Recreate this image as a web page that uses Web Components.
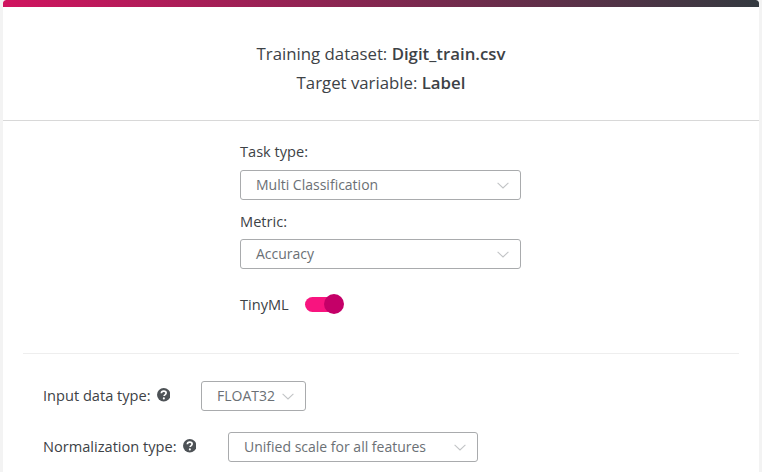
<!DOCTYPE html>
<html><head><meta charset="utf-8"><style>
html,body{margin:0;padding:0;background:#f3f3f3;height:472px;overflow:hidden}
body{font-family:"Open Sans",sans-serif;color:#3d4246}
b{font-weight:600}
</style></head><body>
<app-card>
  <div slot="summary">Training dataset: <b>Digit_train.csv</b></div>
  <div slot="summary">Target variable: <b>Label</b></div>
  <field-block label="Task type:" value="Multi Classification"></field-block>
  <field-block label="Metric:" value="Accuracy"></field-block>
  <toggle-row label="TinyML"></toggle-row>
  <inline-row slot="advanced" label="Input data type:" value="FLOAT32" width="105" gap="31"></inline-row>
  <inline-row slot="advanced" label="Normalization type:" value="Unified scale for all features" width="250" gap="32"></inline-row>
</app-card>
<script>
class AppCard extends HTMLElement{constructor(){super();this.attachShadow({mode:'open'}).innerHTML=`<style>
:host{display:block;margin:0 3px;background:#fff;border-radius:3px 3px 0 0;height:472px;overflow:hidden}
.bar{height:7px;background:linear-gradient(90deg,#d0145f,#343a40);border-radius:3px 3px 0 0}
.summary{height:114px;box-sizing:border-box;padding-top:32px;border-bottom:1px solid #d8d8d8;text-align:center;font-size:16.8px;line-height:29px;color:#3d4246}
.main{width:281px;margin-left:237px;padding-top:20px;height:232px;box-sizing:border-box}
.rule{height:1px;background:#eeeeee;margin:0 20px}
.adv{padding:27px 0 0 40px}
</style><div class="bar"></div><div class="summary"><slot name="summary"></slot></div>
<div class="main"><slot></slot></div><div class="rule"></div><div class="adv"><slot name="advanced"></slot></div>`}}
const chev=`<svg width="12" height="7" viewBox="0 0 12 7" fill="none" stroke="#c2c4c6" stroke-width="1.1"><path d="M.6.8 6 6 11.4.8"/></svg>`;
class SelectBox extends HTMLElement{constructor(){super();this.attachShadow({mode:'open'}).innerHTML=`<style>
:host{display:flex;align-items:center;box-sizing:border-box;height:30px;border:1px solid #a9abad;border-radius:3px;padding:0 11px 0 15px;font-size:14px;color:#6b7075;background:#fff;justify-content:space-between}
span{white-space:nowrap;margin-bottom:2px}svg{display:block;margin-top:1px}
</style><span><slot></slot></span>${chev}`}}
class FieldBlock extends HTMLElement{constructor(){super();this.attachShadow({mode:'open'}).innerHTML=`<style>
:host{display:block;margin-bottom:11px}
label{display:block;font-size:14.6px;line-height:20px;margin-bottom:9px;color:#3d4246}
:host(:nth-of-type(2)) label{margin-bottom:8px}
</style><label>${this.getAttribute('label')}</label><select-box>${this.getAttribute('value')}</select-box>`}}
class ToggleRow extends HTMLElement{constructor(){super();this.attachShadow({mode:'open'}).innerHTML=`<style>
:host{display:flex;align-items:center;margin-top:25px;height:20px;font-size:14.6px;color:#3d4246}
.t{position:relative;width:35px;height:15px;border-radius:8px;background:#f8147f;margin-left:16px}
.k{position:absolute;right:-4px;top:-3px;width:20px;height:20px;border-radius:50%;background:#c40068}
</style><span>${this.getAttribute('label')}</span><div class="t"><div class="k"></div></div>`}}
class InlineRow extends HTMLElement{constructor(){super();const w=this.getAttribute('width'),g=this.getAttribute('gap');this.attachShadow({mode:'open'}).innerHTML=`<style>
:host{display:flex;align-items:center;height:30px;margin-bottom:21px;font-size:14.6px;color:#3d4246}
svg{margin-left:6px;display:block;flex:none;margin-top:-2px}
select-box{width:${w}px;margin-left:${g}px;flex:none}
span{white-space:nowrap;margin-top:-2px}
</style><span>${this.getAttribute('label')}</span><svg width="13.5" height="13.5" viewBox="0 0 13 13"><circle cx="6.5" cy="6.5" r="6.5" fill="#4d5256"/><path d="M4.2 5.1c0-1.3 1-2.1 2.3-2.1s2.3.8 2.3 1.9c0 .9-.6 1.3-1.2 1.7-.5.3-.7.5-.7 1.1" fill="none" stroke="#fff" stroke-width="1.6"/><circle cx="6.6" cy="10" r="1" fill="#fff"/></svg><select-box>${this.getAttribute('value')}</select-box>`}}
customElements.define('select-box',SelectBox);
customElements.define('field-block',FieldBlock);
customElements.define('toggle-row',ToggleRow);
customElements.define('inline-row',InlineRow);
customElements.define('app-card',AppCard);
</script>
</body></html>
